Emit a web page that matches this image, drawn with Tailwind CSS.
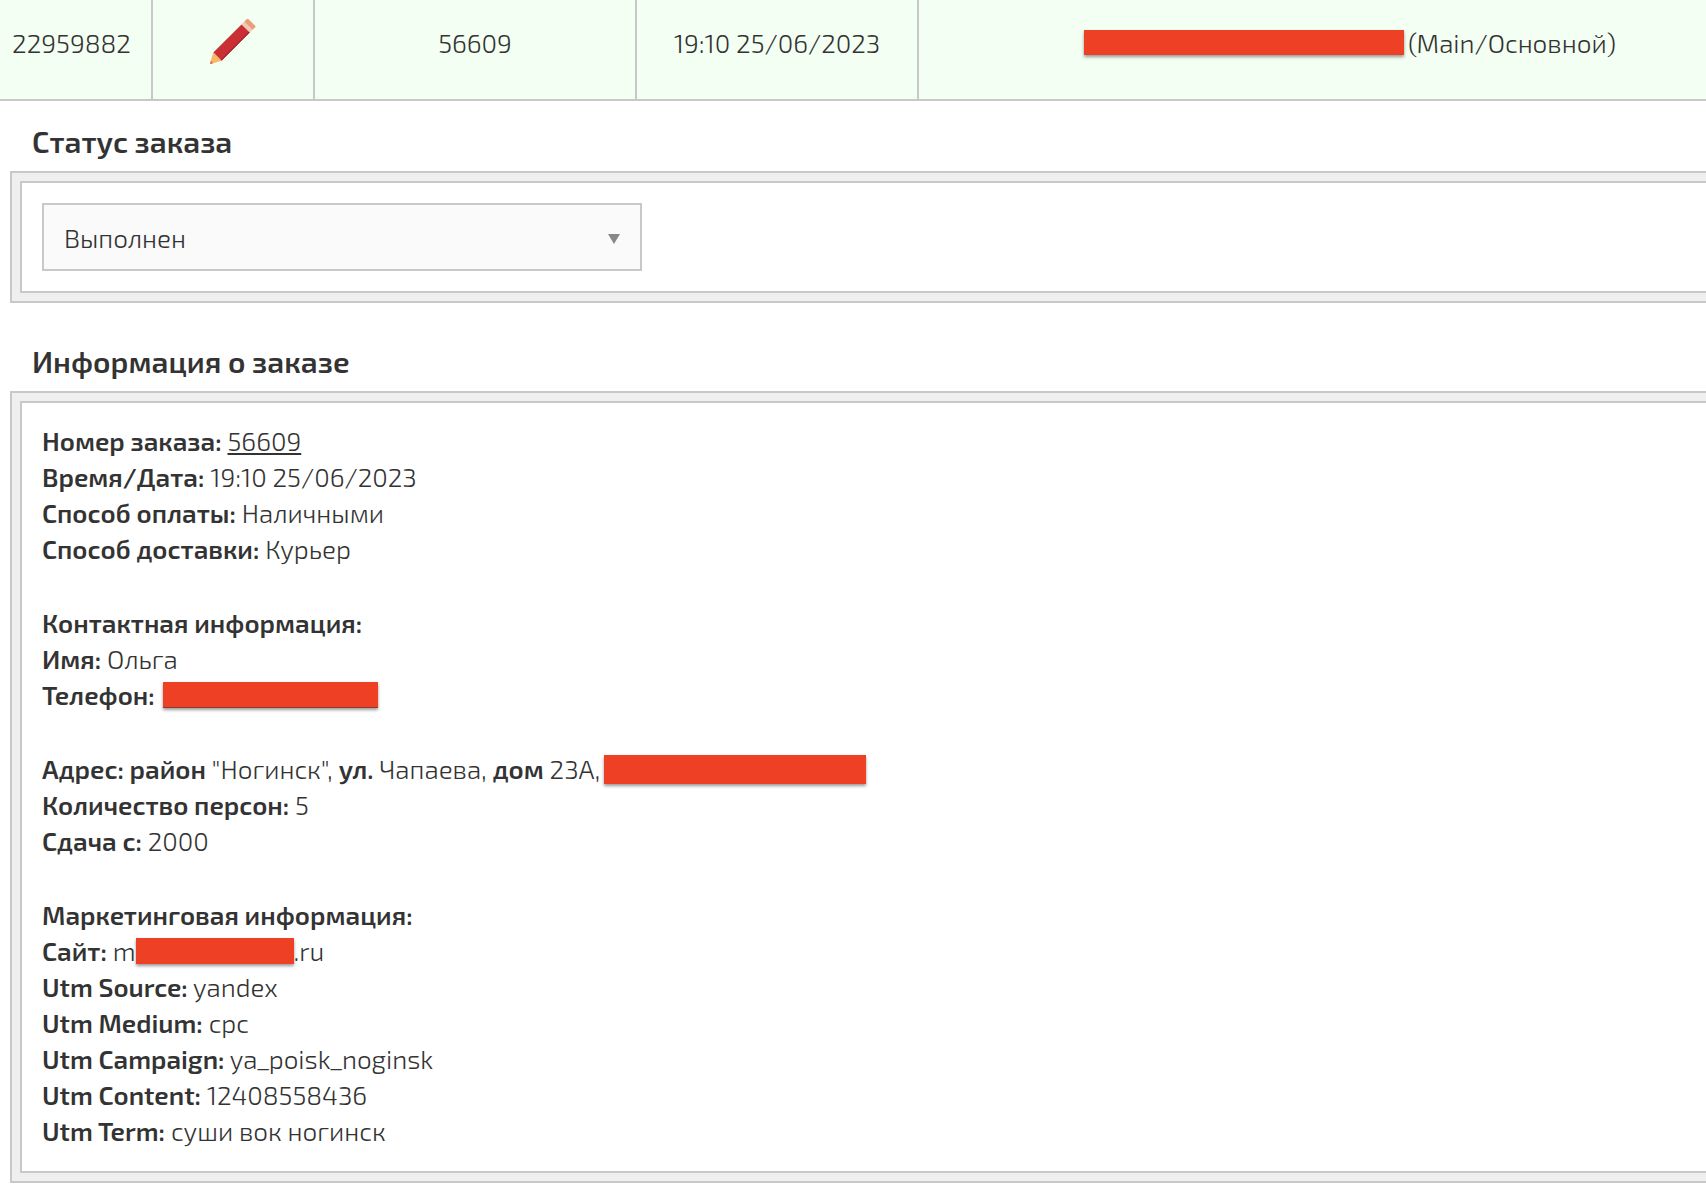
<!DOCTYPE html>
<html lang="ru">
<head>
    <meta charset="UTF-8">
    <meta name="viewport" content="width=device-width, initial-scale=1.0">
    <title>Заказ 56609</title>
    <script src="https://cdn.jsdelivr.net/npm/@tailwindcss/browser@4"></script>
</head>
<body class="bg-white text-[#333] font-['Exo_2',Roboto,sans-serif] font-light text-[26px] leading-[36px] overflow-x-hidden">
    <!-- Order row -->
    <table class="w-full table-fixed border-separate border-spacing-0 bg-[#f3fff2] text-center">
        <tbody>
            <tr>
                <td class="w-[153px] h-[101px] pb-[14px] pr-2 border-r-2 border-b-2 border-[#c8c8c8]">22959882</td>
                <td class="w-[162px] pb-[18px] border-r-2 border-b-2 border-[#c8c8c8]">
                    <button type="button" aria-label="Редактировать" class="block mx-auto cursor-pointer">
                        <svg class="w-[46px] h-[46px]" viewBox="0 0 46 46">
                            <path fill="#e8a07c" d="M36.6 1.2q1-1 2 0l6.4 6.4q1 1 0 2l-2.6 2.4-8.3-8.2z" />
                            <path fill="#f5c9b0" d="M34.3 3.6l8.3 8.2-2.9 2.8-8.2-8.2z" />
                            <path fill="#c83036" d="M31.5 6.4l8.2 8.2-28.2 28.2-8.2-8.2z" />
                            <path fill="#a8202c" d="M38.9 13.8l.8.8-28.2 28.2-.8-.8z" />
                            <path fill="#f8b868" d="M3.3 34.6l8.2 8.2-9.2 2.8-1.9-1.9z" />
                            <path fill="#e0604c" d="M.9 42.8l2.2 2.5-2.3.6q-.9 0-.6-.9z" />
                        </svg>
                    </button>
                </td>
                <td class="w-[322px] pb-[14px] border-r-2 border-b-2 border-[#c8c8c8]">56609</td>
                <td class="w-[282px] pb-[14px] border-r-2 border-b-2 border-[#c8c8c8]">19:10 25/06/2023</td>
                <td class="pb-[14px] pl-[75px] border-b-2 border-[#c8c8c8]">
                    <div class="flex items-center justify-center gap-1">
                        <span class="w-[320px] h-[25px] bg-[#ed4024] shadow-[0_2px_3px_rgba(0,0,0,0.4)]"></span>
                        <span>(Main/Основной)</span>
                    </div>
                </td>
            </tr>
        </tbody>
    </table>

    <main class="pl-[10px]">
        <!-- Status -->
        <section>
            <h2 class="pt-5 pb-[10px] pl-[22px] text-[30px] leading-[40px] font-semibold"><label for="status">Статус заказа</label></h2>
            <div class="border-2 border-r-0 border-[#c8c8c8] bg-[#efefef] p-2 pr-0">
                <div class="border-2 border-r-0 border-[#c8c8c8] bg-white p-5">
                    <div class="relative w-[600px] max-w-full">
                        <select id="status" class="block w-full h-[68px] appearance-none rounded-none border-2 border-[#c8c8c8] bg-[#fafafa] px-5 pt-[2px]">
                            <option>Выполнен</option>
                        </select>
                        <svg class="absolute right-[22px] top-[31px] w-3 h-[10px] pointer-events-none" viewBox="0 0 12 10">
                            <path fill="#888" d="M0 0h12L6 10z" />
                        </svg>
                    </div>
                </div>
            </div>
        </section>

        <!-- Order info -->
        <section>
            <h2 class="pt-[38px] pb-[10px] pl-[22px] text-[30px] leading-[40px] font-semibold">Информация о заказе</h2>
            <div class="border-2 border-r-0 border-[#c8c8c8] bg-[#efefef] p-2 pr-0">
                <div class="flex flex-col gap-[38px] border-2 border-r-0 border-[#c8c8c8] bg-white px-5 pt-5 pb-[22px]">
                    <div>
                        <p><b class="font-semibold">Номер заказа:</b> <a href="#" class="underline decoration-2 underline-offset-2">56609</a></p>
                        <p><b class="font-semibold">Время/Дата:</b> 19:10 25/06/2023</p>
                        <p><b class="font-semibold">Способ оплаты:</b> Наличными</p>
                        <p><b class="font-semibold">Способ доставки:</b> Курьер</p>
                    </div>
                    <div>
                        <p><b class="font-semibold">Контактная информация:</b></p>
                        <p><b class="font-semibold">Имя:</b> Ольга</p>
                        <p class="flex items-center gap-2"><b class="font-semibold">Телефон:</b> <a href="#" aria-label="Телефон" class="w-[215px] h-[26px] border-b border-[#8f3a30] bg-[#ed4024] shadow-[0_2px_3px_rgba(0,0,0,0.4)]"></a></p>
                    </div>
                    <div>
                        <p class="flex items-center gap-1"><span><b class="font-semibold">Адрес: район</b> "Ногинск", <b class="font-semibold">ул.</b> Чапаева, <b class="font-semibold">дом</b> 23А,</span><span class="w-[262px] h-[29px] bg-[#ed4024] shadow-[0_2px_3px_rgba(0,0,0,0.4)]"></span></p>
                        <p><b class="font-semibold">Количество персон:</b> 5</p>
                        <p><b class="font-semibold">Сдача с:</b> 2000</p>
                    </div>
                    <div>
                        <p><b class="font-semibold">Маркетинговая информация:</b></p>
                        <p class="flex items-center"><span><b class="font-semibold">Сайт:</b> m</span><span class="w-[158px] h-[26px] bg-[#ed4024] shadow-[0_2px_3px_rgba(0,0,0,0.4)]"></span><span>.ru</span></p>
                        <p><b class="font-semibold">Utm Source:</b> yandex</p>
                        <p><b class="font-semibold">Utm Medium:</b> cpc</p>
                        <p><b class="font-semibold">Utm Campaign:</b> ya_poisk_noginsk</p>
                        <p><b class="font-semibold">Utm Content:</b> 12408558436</p>
                        <p><b class="font-semibold">Utm Term:</b> суши вок ногинск</p>
                    </div>
                </div>
            </div>
        </section>
    </main>
</body>
</html>
